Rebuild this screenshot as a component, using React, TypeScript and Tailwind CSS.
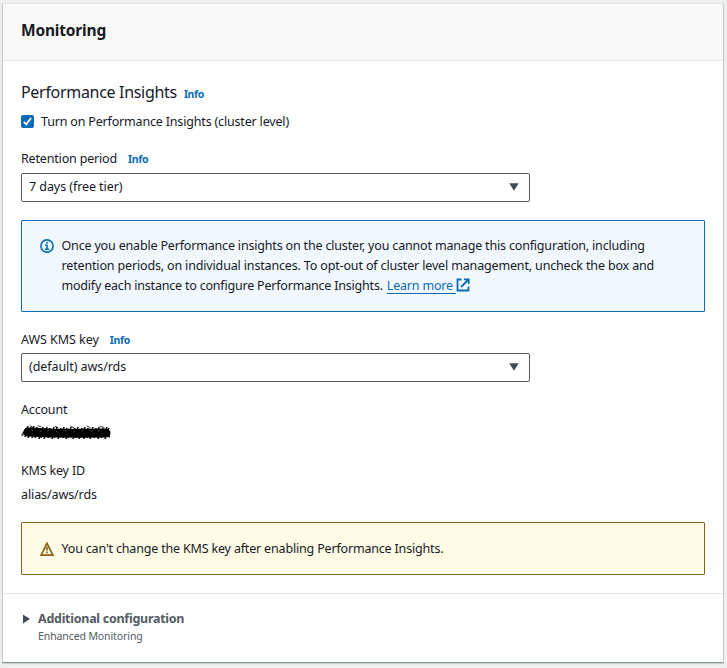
import type { ReactNode } from "react";

function InfoLink({ className = "" }: { className?: string }) {
  return (
    <a className={`text-[10.5px] font-bold tracking-[-0.35px] text-[#0a6cb5] ${className}`}>Info</a>
  );
}

function SelectBox({ children }: { children: ReactNode }) {
  return (
    <div className="flex h-[29px] w-[509px] items-center justify-between rounded-[2px] border border-[#545b64] bg-white pr-[10px] pb-px pl-[7px]">
      <span className="tracking-[-0.07px]">{children}</span>
      <svg width="10" height="8" viewBox="0 0 10 8" fill="#424b55">
        <path d="M0.3 0.3h9.4L5 7.8z" />
      </svg>
    </div>
  );
}

function InfoIcon() {
  return (
    <svg width="14" height="14" viewBox="0 0 14 14" fill="none" stroke="#0a6cb5" className="shrink-0">
      <circle cx="7" cy="7" r="6.1" strokeWidth="1.6" />
      <path d="M7 3v1.8M5 6.3h2v3.9M4.8 10.2h4.4" strokeWidth="1.6" />
    </svg>
  );
}

function WarningIcon() {
  return (
    <svg width="14" height="14" viewBox="0 0 14 14" fill="none" stroke="#8a6116" className="shrink-0">
      <path d="M7 1.3L12.9 13.1H1.1z" strokeWidth="1.7" />
      <path d="M7 5v3.6M7 9.6v1.6" strokeWidth="1.6" />
    </svg>
  );
}

function ExternalIcon() {
  return (
    <svg width="14" height="14" viewBox="0 0 14 14" fill="none" stroke="#0a6cb5" strokeWidth="1.8">
      <path d="M5.5 1.5H1.5v11h11V8.5" />
      <path d="M8 1.4h4.7V6M12.5 1.5L5 9" />
    </svg>
  );
}

function Redaction() {
  return (
    <svg width="90" height="18" viewBox="0 0 90 18" fill="none" stroke="#000" strokeLinecap="round" strokeLinejoin="round">
      <path d="M7 9L30 10L60 10.3L85 10" strokeWidth="9" />
      <path
        d="M1 12L5 5L3 10L7 3L4 14L10 4L7 15L13 3L11 15L16 4L14 15L19 5L18 16L22 4L20 15L26 4L23 16L29 5L27 15L33 4L31 16L36 4L33 15L40 5L37 16L43 4L42 15L46 5L45 16L50 4L47 15L54 5L52 16L57 4L55 15L61 5L58 16L64 4L63 16L67 5L66 15L72 4L69 16L75 5L73 15L78 4L77 16L82 5L80 15L86 4L84 16L88 5L85 10L89 8L86 12L89 14L85 13"
        strokeWidth="1"
      />
      <path d="M1 12h3M2 10l3 3M9 2.5l3 2M17 2.8l3 1M34 3.2l3 1.4M50 3.4l3 1.2M66 3.2l3 1.3M79 3.4l4 1" strokeWidth="0.8" />
      <path d="M11 7l1 1M19 8.2l1 .3M27 7.2v1M35 8l1 1M44 7.4l1 .6M53 8v1M61 7.3l1 .8M70 8l1 .5M78 7.5v1" stroke="#777" strokeWidth="0.7" />
    </svg>
  );
}

export default function App() {
  return (
    <div className="h-[668px] w-[727px] bg-[#eff1f1] pt-[3px] pl-[2px] font-['Noto_Sans','Open_Sans',sans-serif] text-[12.5px] leading-5 tracking-[-0.175px] text-[#16191f]">
      <section className="h-[660px] w-[722px] border border-t-[#e3e6e6] border-r-[#c8cccc] border-b-[#879596] border-l-[#c8cccc] bg-white shadow-[0_1px_1px_rgba(0,28,36,0.15)]">
        <header className="flex h-[57px] items-center border-b border-[#e3e6e6] bg-[#f9f9f9] px-[18px] pb-[5px]">
          <h1 className="text-[15.5px] font-bold tracking-[-0.18px]">Monitoring</h1>
        </header>
        <div className="h-[532px] px-[18px] pt-[21px]">
          <div className="flex h-5 items-center">
            <h2 className="text-base tracking-[-0.31px]">Performance Insights</h2>
            <InfoLink className="mt-1 ml-[7px]" />
          </div>
          <label className="mt-[10px] flex h-5 items-center">
            <span className="mb-[2px] flex size-[13px] items-center justify-center rounded-[2px] bg-[#0a6cb5]">
              <svg width="9" height="9" viewBox="0 0 9 9" fill="none" stroke="#fff" strokeWidth="1.8">
                <path d="M0.8 4.8L3.3 7.3L8 1" />
              </svg>
            </span>
            <span className="ml-[7px] whitespace-nowrap">Turn on Performance Insights (cluster level)</span>
          </label>
          <div className="mt-[17px] flex h-5 items-center">
            <span>Retention period</span>
            <InfoLink className="ml-[11px]" />
          </div>
          <div className="mt-1">
            <SelectBox>7 days (free tier)</SelectBox>
          </div>
          <div className="mt-[18px] flex h-[92px] w-[684px] rounded-[1px] border border-[#0a6cb5] bg-[#f1f8ff] pt-[15px] pl-[18px]">
            <div className="pt-[3px]">
              <InfoIcon />
            </div>
            <div className="ml-[7.5px] whitespace-nowrap">
              <p>Once you enable Performance insights on the cluster, you cannot manage this configuration, including</p>
              <p className="tracking-[-0.155px]">retention periods, on individual instances. To opt-out of cluster level management, uncheck the box and</p>
              <p className="flex tracking-[-0.2px]">
                <span>modify each instance to configure Performance Insights.</span>
                <a className="ml-1 flex text-[#0a6cb5]">
                  <span className="h-[18px] border-b border-[#0a6cb5] pr-[3px]">Learn more</span>
                  <span className="pt-[2px]"><ExternalIcon /></span>
                </a>
              </p>
            </div>
          </div>
          <div className="mt-[18px] flex h-5 items-center">
            <span className="tracking-[-0.05px]">AWS KMS key</span>
            <InfoLink className="ml-[11px]" />
          </div>
          <div className="mt-[3px]">
            <SelectBox>(default) aws/rds</SelectBox>
          </div>
          <p className="mt-[18px]">Account</p>
          <div className="mt-[3px] h-[18px]">
            <Redaction />
          </div>
          <p className="mt-5">KMS key ID</p>
          <p className="mt-1 tracking-[-0.1px]">alias/aws/rds</p>
          <div className="mt-[17px] flex h-[53px] w-[684px] items-center rounded-[1px] border border-[#8a6116] bg-[#fffbe6] pl-[18px]">
            <WarningIcon />
            <span className="ml-[7.5px]">You can't change the KMS key after enabling Performance Insights.</span>
          </div>
        </div>
        <footer className="flex h-[69px] border-t border-[#e3e6e6] pt-[15px] pl-5 text-[#545b64]">
          <svg width="7" height="10" viewBox="0 0 7 10" fill="#424b55" className="mt-[5px]">
            <path d="M0 0.5v9l7-4.5z" />
          </svg>
          <div className="ml-2">
            <p className="font-bold tracking-[-0.27px]">Additional configuration</p>
            <p className="text-[10.5px] leading-[15px] tracking-[-0.1px]">Enhanced Monitoring</p>
          </div>
        </footer>
      </section>
    </div>
  );
}
